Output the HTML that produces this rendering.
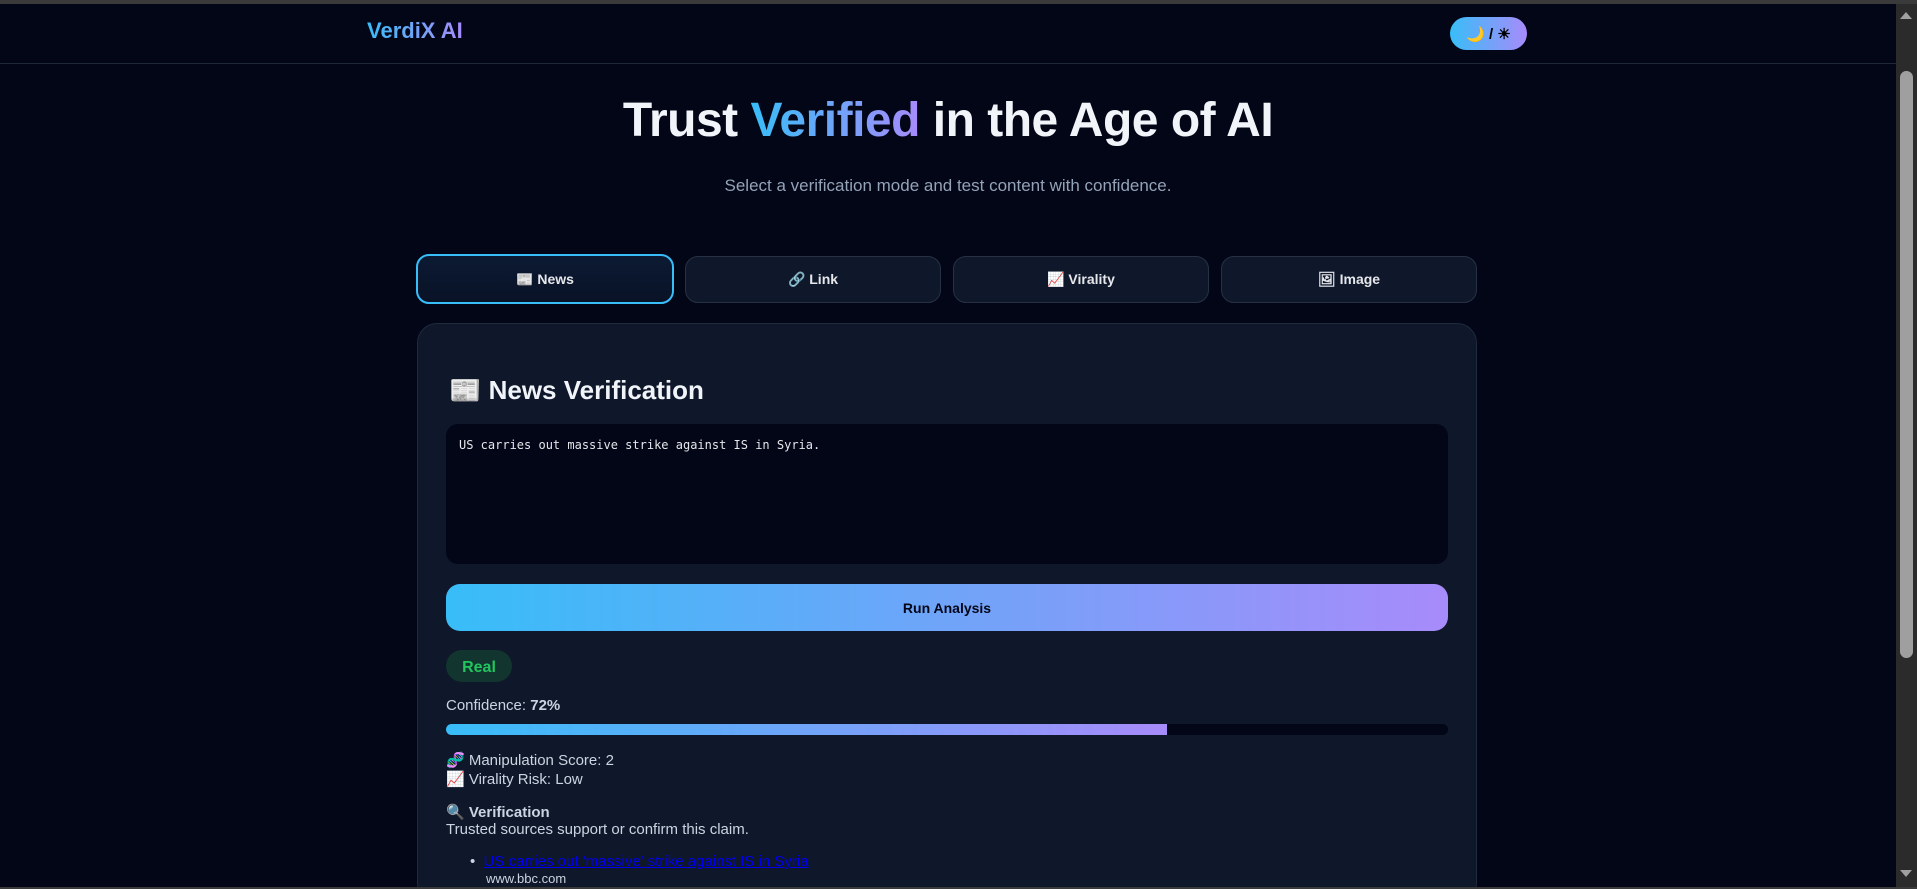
<!DOCTYPE html>
<html><head><meta charset="utf-8"><style>
*{box-sizing:border-box;margin:0;padding:0}
html,body{width:1917px;height:889px;overflow:hidden;background:#020617;font-family:"Liberation Sans",sans-serif;color:#e5e7eb}
body{position:relative}
.topb{position:absolute;left:0;top:0;width:1917px;height:4px;background:#3a3a3a}
.botb{position:absolute;left:0;top:887px;width:1917px;height:2px;background:#3a3a3a}
.hdr{position:absolute;left:0;top:4px;width:1896px;height:60px;border-bottom:1px solid #1f2937}
.logo{position:absolute;left:367px;top:18px;font-size:22px;font-weight:bold;background:linear-gradient(90deg,#38bdf8,#a78bfa);-webkit-background-clip:text;color:transparent}
.tog{position:absolute;left:1450px;top:17px;width:77px;height:33px;border-radius:17px;background:linear-gradient(90deg,#38bdf8,#a78bfa);color:#000;font-weight:bold;font-size:15px;display:flex;align-items:center;justify-content:center;gap:4px}
.sb{position:absolute;left:1896px;top:4px;width:21px;height:883px;background:#2b2b2b}
.thumb{position:absolute;left:1900px;top:71px;width:13px;height:587px;border-radius:7px;background:#9f9f9f}
.arr{position:absolute;left:1900px;width:0;height:0;border-left:6px solid transparent;border-right:6px solid transparent}
h1{position:absolute;left:0;width:1896px;top:93px;text-align:center;font-size:48px;font-weight:bold;color:#f1f5f9;letter-spacing:-0.5px}
h1 span{background:linear-gradient(90deg,#38bdf8,#a78bfa);-webkit-background-clip:text;color:transparent}
.sub{position:absolute;left:0;width:1896px;top:176px;text-align:center;font-size:17px;color:#94a3b8}
.tab{position:absolute;top:256px;height:47px;width:256px;border:1px solid #263244;border-radius:13px;background:#0f172a;color:#e5e7eb;font-size:14px;font-weight:bold;display:flex;align-items:center;justify-content:center}
.tab.act{border:2px solid #38bdf8;background:linear-gradient(#0b1a33,#0a1226);top:254px;height:50px;width:258px;left:416px}
.card{position:absolute;left:417px;top:323px;width:1060px;height:580px;border:1px solid #1f2a3c;border-radius:20px;background:#0f172a}
.ct{position:absolute;left:449px;top:375px;font-size:26px;font-weight:bold;color:#f1f5f9}
.ta{position:absolute;left:446px;top:424px;width:1002px;height:140px;border-radius:12px;background:#020617;font-family:"DejaVu Sans Mono","Liberation Mono",monospace;font-size:12px;color:#e5e7eb;padding:14px 13px}
.btn{position:absolute;left:446px;top:584px;width:1002px;height:47px;border-radius:14px;background:linear-gradient(90deg,#38bdf8,#a78bfa);color:#020617;font-weight:bold;font-size:14px;display:flex;align-items:center;justify-content:center}
.real{position:absolute;left:446px;top:650px;width:66px;height:32px;border-radius:16px;background:#12352f;color:#22c55e;font-weight:bold;font-size:16px;display:flex;align-items:center;justify-content:center;padding-top:3px}
.t{position:absolute;left:446px;font-size:15px;color:#cbd5e1;white-space:nowrap}
.bar{position:absolute;left:446px;top:724px;width:1002px;height:11px;border-radius:6px;background:#020617;overflow:hidden}
.bar div{width:72%;height:100%;background:linear-gradient(90deg,#38bdf8,#a78bfa)}
a{color:#0000ee;text-decoration:underline}
</style></head><body>
<div class="topb"></div>
<div class="hdr"></div>
<div class="logo">VerdiX AI</div>
<div class="tog">🌙 / ☀</div>
<h1>Trust <span>Verified</span> in the Age of AI</h1>
<div class="sub">Select a verification mode and test content with confidence.</div>
<div class="tab act">📰&nbsp;News</div>
<div class="tab" style="left:685px">🔗&nbsp;Link</div>
<div class="tab" style="left:953px">📈&nbsp;Virality</div>
<div class="tab" style="left:1221px">🖼&nbsp;Image</div>
<div class="card"></div>
<div class="ct">📰 News Verification</div>
<div class="ta">US carries out massive strike against IS in Syria.</div>
<div class="btn">Run Analysis</div>
<div class="real">Real</div>
<div class="t" style="top:697px">Confidence: <b>72%</b></div>
<div class="bar"><div></div></div>
<div class="t" style="top:751px">🧬 Manipulation Score: 2</div>
<div class="t" style="top:770px">📈 Virality Risk: Low</div>
<div class="t" style="top:803px"><b>🔍 Verification</b></div>
<div class="t" style="top:821px">Trusted sources support or confirm this claim.</div>
<div class="t" style="top:853px;left:470px">•&nbsp;&nbsp;<a>US carries out 'massive' strike against IS in Syria</a></div>
<div class="t" style="top:871px;left:486px;font-size:13px;color:#cbd5e1">www.bbc.com</div>
<div class="sb"></div>
<div class="thumb"></div>
<div class="arr" style="top:12px;border-bottom:7px solid #a0a0a0"></div>
<div class="arr" style="top:870px;border-top:7px solid #a0a0a0"></div>
<div class="botb"></div>
</body></html>
